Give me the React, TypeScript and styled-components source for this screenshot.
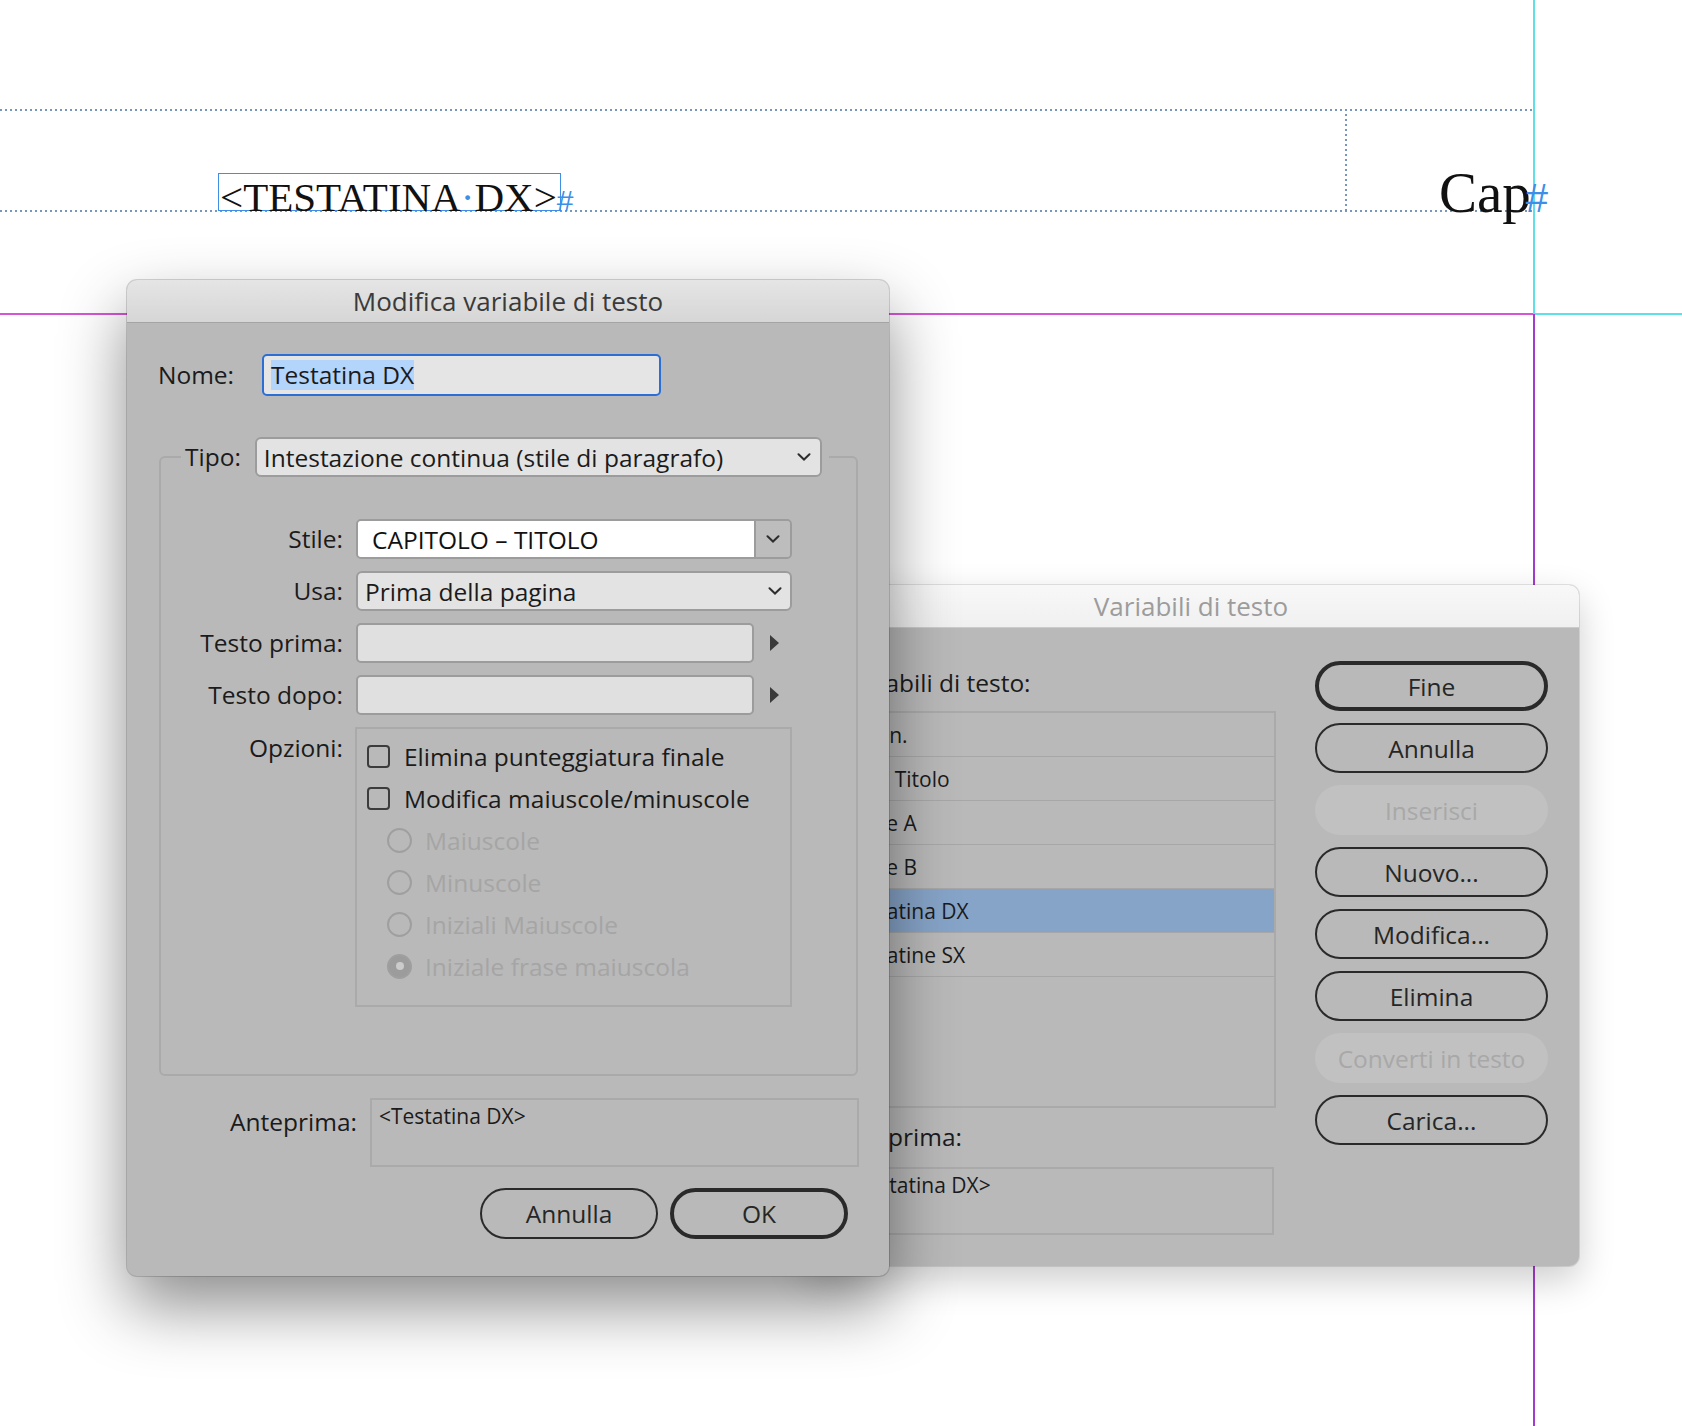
import React from "react";
import styled, { createGlobalStyle, css } from "styled-components";

const GlobalStyle = createGlobalStyle`
  html, body {
    margin: 0;
    padding: 0;
    background: #ffffff;
  }
  body {
    font-family: "Open Sans", "Liberation Sans", sans-serif;
    overflow: hidden;
  }
`;

const Canvas = styled.div`
  position: relative;
  width: 1682px;
  height: 1426px;
  overflow: hidden;
  background: #ffffff;
`;

// guides and frames live on the document page, so they keep their page coordinates
const Guide = styled.div<{
  $top: number;
  $left: number;
  $w: number;
  $h: number;
  $color: string;
  $dotted?: boolean;
}>`
  position: absolute;
  top: ${(p) => p.$top}px;
  left: ${(p) => p.$left}px;
  width: ${(p) => p.$w}px;
  height: ${(p) => p.$h}px;
  background: ${(p) =>
    p.$dotted
      ? `repeating-linear-gradient(${p.$w > p.$h ? "90deg" : "180deg"}, ${p.$color} 0 2px, transparent 2px 5px)`
      : p.$color};
`;

const TextFrame = styled.div`
  position: absolute;
  left: 218px;
  top: 173px;
  width: 341px;
  height: 36px;
  border: 1px solid #3f8fe4;
`;

const FrameText = styled.div`
  font-family: "Liberation Serif", serif;
  font-size: 41px;
  line-height: 47px;
  color: #111111;
  white-space: nowrap;
  padding-left: 1px;
`;

const SpaceMark = styled.span`
  color: #3f8fe4;
`;

const StoryEnd = styled.span<{ $size: number; $shift?: number }>`
  font-family: "Liberation Sans", sans-serif;
  font-size: ${(p) => p.$size}px;
  color: #3b8fe8;
  margin-left: ${(p) => p.$shift ?? 0}px;
`;

const RunningHead = styled.div`
  position: absolute;
  left: 1439px;
  top: 163px;
  font-family: "Liberation Serif", serif;
  font-size: 57px;
  line-height: 60px;
  color: #111111;
  white-space: nowrap;
`;

const Window = styled.section<{
  $left: number;
  $top: number;
  $width: number;
  $height: number;
  $front?: boolean;
}>`
  position: absolute;
  left: ${(p) => p.$left}px;
  top: ${(p) => p.$top}px;
  width: ${(p) => p.$width}px;
  height: ${(p) => p.$height}px;
  z-index: ${(p) => (p.$front ? 3 : 2)};
  display: flex;
  flex-direction: column;
  box-sizing: border-box;
  background: #b9b9b9;
  border-radius: 10px;
  overflow: hidden;
  color: #1b1b1b;
  box-shadow: ${(p) =>
    p.$front
      ? "0 0 0 1px rgba(0,0,0,0.16), 0 30px 66px rgba(0,0,0,0.45)"
      : "0 0 0 1px rgba(0,0,0,0.10), 0 14px 36px rgba(0,0,0,0.20)"};
`;

const TitleBar = styled.header<{ $active?: boolean }>`
  flex: none;
  height: 42px;
  display: flex;
  align-items: center;
  justify-content: center;
  font-size: 26px;
  background: ${(p) =>
    p.$active ? "linear-gradient(#e5e5e5, #d6d6d6)" : "linear-gradient(#f8f8f8, #f0f0f0)"};
  border-bottom: 1px solid ${(p) => (p.$active ? "#a4a4a4" : "#cbcbcb")};
  color: ${(p) => (p.$active ? "#3a3a3a" : "#9c9c9c")};
`;

const Label = styled.span<{ $width?: number; $right?: boolean; $top?: boolean }>`
  font-size: 24.5px;
  line-height: 34px;
  white-space: nowrap;
  ${(p) => p.$width && `width: ${p.$width}px; flex: none;`}
  ${(p) => p.$right && "text-align: right;"}
  ${(p) =>
    p.$top &&
    css`
      align-self: start;
      margin-top: 4px;
    `}
`;

/* ---------- Modifica variabile di testo ---------- */

const EditBody = styled.div`
  display: flex;
  flex-direction: column;
  padding-top: 31px;
`;

const NameRow = styled.div`
  display: flex;
  align-items: center;
  padding-left: 31px;
`;

const NameField = styled.div`
  width: 399px;
  height: 42px;
  box-sizing: border-box;
  display: flex;
  align-items: center;
  padding-left: 7px;
  border: 2.5px solid #2b6fd6;
  border-radius: 5px;
  background: #e5e5e5;
  font-size: 24.5px;
`;

const Selection = styled.span`
  background: #b3d4fb;
  line-height: 30px;
`;

const Group = styled.fieldset`
  margin: 41px 31px 0 32px;
  padding: 0 0 67px 0;
  min-width: 0;
  border: 2px solid #aaaaaa;
  border-radius: 6px;
`;

const GroupLegend = styled.legend`
  display: flex;
  align-items: center;
  gap: 14px;
  margin-left: 20px;
  padding: 0 7px 0 4px;
`;

const Select = styled.div<{ $width: number; $pad: number }>`
  width: ${(p) => p.$width}px;
  height: 40px;
  box-sizing: border-box;
  display: flex;
  align-items: center;
  justify-content: space-between;
  padding: 0 ${(p) => p.$pad}px 0 7px;
  background: #e3e3e3;
  border: 2px solid #9c9c9c;
  border-radius: 6px;
  font-size: 24.5px;
  white-space: nowrap;
`;

const Combo = styled.div`
  width: 436px;
  height: 40px;
  box-sizing: border-box;
  display: flex;
  border: 2px solid #9c9c9c;
  border-radius: 5px;
  overflow: hidden;
`;

const ComboText = styled.div`
  flex: 1;
  display: flex;
  align-items: center;
  padding-left: 14px;
  background: #ffffff;
  border-right: 2px solid #9c9c9c;
  font-size: 24.5px;
  color: #111111;
`;

const ComboButton = styled.div`
  width: 34px;
  display: flex;
  align-items: center;
  justify-content: center;
  background: #bdbdbd;
`;

const FieldGrid = styled.div`
  display: grid;
  grid-template-columns: 182px 436px;
  column-gap: 13px;
  row-gap: 12px;
  align-items: center;
  margin-top: 42px;
`;

const FieldLine = styled.div`
  display: flex;
  align-items: center;
  gap: 16px;
`;

const TextInput = styled.div<{ $width: number }>`
  width: ${(p) => p.$width}px;
  height: 40px;
  box-sizing: border-box;
  background: #e0e0e0;
  border: 2px solid #9c9c9c;
  border-radius: 5px;
`;

const OptionsBox = styled.div`
  height: 280px;
  width: 437px;
  margin-left: -1px;
  box-sizing: border-box;
  padding: 6px 0 0 10px;
  border: 2px solid #aaaaaa;
`;

const Option = styled.div<{ $indent?: boolean; $disabled?: boolean }>`
  height: 42px;
  display: flex;
  align-items: center;
  gap: 13px;
  padding-left: ${(p) => (p.$indent ? 20 : 0)}px;
  font-size: 24.5px;
  white-space: nowrap;
  color: ${(p) => (p.$disabled ? "#a5a5a5" : "#1b1b1b")};
`;

const CheckBox = styled.span`
  flex: none;
  width: 23px;
  height: 23px;
  margin-right: 1px;
  box-sizing: border-box;
  border: 2px solid #3c3c3c;
  border-radius: 4px;
`;

const Radio = styled.span<{ $checked?: boolean }>`
  flex: none;
  width: 25px;
  height: 25px;
  box-sizing: border-box;
  border-radius: 50%;
  border: 2px solid #9f9f9f;
  display: flex;
  align-items: center;
  justify-content: center;
  ${(p) =>
    p.$checked &&
    css`
      background: #9c9c9c;
      &::after {
        content: "";
        width: 8px;
        height: 8px;
        border-radius: 50%;
        background: #cbcbcb;
      }
    `}
`;

const PreviewRow = styled.div`
  display: flex;
  justify-content: flex-end;
  align-items: flex-start;
  gap: 13px;
  margin: 22px 30px 0 0;
`;

const PreviewLabel = styled(Label)`
  margin-top: 7px;
`;

const PreviewBox = styled.div<{ $width: number; $height: number }>`
  width: ${(p) => p.$width}px;
  height: ${(p) => p.$height}px;
  box-sizing: border-box;
  padding: 2px 7px;
  border: 2px solid #aaaaaa;
  font-size: 21px;
  line-height: 28px;
  white-space: nowrap;
`;

const ButtonRow = styled.div`
  display: flex;
  justify-content: flex-end;
  gap: 12px;
  margin: 21px 41px 0 0;
`;

const PushButton = styled.button<{ $default?: boolean; $width: number; $height: number }>`
  width: ${(p) => p.$width}px;
  height: ${(p) => p.$height}px;
  box-sizing: border-box;
  padding: 0;
  border-radius: ${(p) => p.$height / 2}px;
  border: ${(p) => (p.$default ? 4 : 2)}px solid #2a2a2a;
  background: transparent;
  font-family: inherit;
  font-size: 24.5px;
  color: #262626;
  &:disabled {
    border-color: transparent;
    background: #c1c1c1;
    color: #a8a8a8;
  }
`;

/* ---------- Variabili di testo ---------- */

const VarsBody = styled.div`
  display: flex;
  gap: 39px;
  padding: 33px 31px 0 32px;
`;

const ListColumn = styled.div`
  width: 441px;
  flex: none;
  display: flex;
  flex-direction: column;
  padding-top: 5px;
`;

const ListCaption = styled(Label)`
  padding-left: 6px;
`;

const VarList = styled.div`
  height: 397px;
  margin-top: 11px;
  box-sizing: border-box;
  border: 2px solid #aaaaaa;
`;

const VarRow = styled.div<{ $selected?: boolean }>`
  height: 44px;
  box-sizing: border-box;
  display: flex;
  align-items: center;
  padding-left: 9px;
  border-bottom: 1px solid #a7a7a7;
  font-size: 21px;
  white-space: nowrap;
  background: ${(p) => (p.$selected ? "#86a4c8" : "transparent")};
`;

const ListLabel = styled(Label)`
  margin-top: 12px;
`;

const ListPreview = styled(PreviewBox)`
  margin-top: 13px;
`;

const ButtonStack = styled.div`
  display: flex;
  flex-direction: column;
  gap: 12px;
`;

const Chevron = () => (
  <svg width="14" height="8" viewBox="0 0 14 8" fill="none">
    <path d="M1.5 1.2 L7 6.5 L12.5 1.2" stroke="#2e2e2e" strokeWidth="2" strokeLinecap="round" />
  </svg>
);

const Arrow = () => (
  <svg width="9" height="16" viewBox="0 0 9 16">
    <path d="M0 0 L9 8 L0 16 Z" fill="#3a3a3a" />
  </svg>
);

const variables = [
  { name: "Cap n." },
  { name: "Cap. Titolo" },
  { name: "Parte A" },
  { name: "Parte B" },
  { name: "Testatina DX", selected: true },
  { name: "Testatine SX" },
];

const sideButtons = [
  { label: "Fine", primary: true },
  { label: "Annulla" },
  { label: "Inserisci", disabled: true },
  { label: "Nuovo..." },
  { label: "Modifica..." },
  { label: "Elimina" },
  { label: "Converti in testo", disabled: true },
  { label: "Carica..." },
];

const caseOptions = [
  { label: "Maiuscole" },
  { label: "Minuscole" },
  { label: "Iniziali Maiuscole" },
  { label: "Iniziale frase maiuscola", checked: true },
];

export default function App() {
  return (
    <Canvas>
      <GlobalStyle />

      <Guide $top={109} $left={0} $w={1534} $h={2} $color="#7696bb" $dotted />
      <Guide $top={210} $left={0} $w={1534} $h={2} $color="#7696bb" $dotted />
      <Guide $top={109} $left={1345} $w={2} $h={102} $color="#7696bb" $dotted />
      <Guide $top={313} $left={0} $w={1534} $h={2} $color="#d655d6" />
      <Guide $top={313} $left={1534} $w={148} $h={2} $color="#5fe0e8" />
      <Guide $top={0} $left={1533} $w={2} $h={314} $color="#5fe0e8" />
      <Guide $top={314} $left={1533} $w={2} $h={1112} $color="#a33ccc" />

      <TextFrame>
        <FrameText>
          {"<"}TESTATINA<SpaceMark>·</SpaceMark>DX{">"}
          <StoryEnd $size={30}>#</StoryEnd>
        </FrameText>
      </TextFrame>

      <RunningHead>
        Cap<StoryEnd $size={40} $shift={-5}>#</StoryEnd>
      </RunningHead>

      <Window $left={803} $top={585} $width={776} $height={681}>
        <TitleBar>Variabili di testo</TitleBar>
        <VarsBody>
          <ListColumn>
            <ListCaption>Variabili di testo:</ListCaption>
            <VarList>
              {variables.map((v) => (
                <VarRow key={v.name} $selected={v.selected}>
                  {v.name}
                </VarRow>
              ))}
            </VarList>
            <ListLabel>Anteprima:</ListLabel>
            <ListPreview $width={439} $height={68}>
              {"<Testatina DX>"}
            </ListPreview>
          </ListColumn>
          <ButtonStack>
            {sideButtons.map((b) => (
              <PushButton
                key={b.label}
                $width={233}
                $height={50}
                $default={b.primary}
                disabled={b.disabled}
              >
                {b.label}
              </PushButton>
            ))}
          </ButtonStack>
        </VarsBody>
      </Window>

      <Window $left={127} $top={280} $width={762} $height={996} $front>
        <TitleBar $active>Modifica variabile di testo</TitleBar>
        <EditBody>
          <NameRow>
            <Label $width={104}>Nome:</Label>
            <NameField>
              <Selection>Testatina DX</Selection>
            </NameField>
          </NameRow>

          <Group>
            <GroupLegend>
              <Label>Tipo:</Label>
              <Select $width={567} $pad={9}>
                Intestazione continua (stile di paragrafo)
                <Chevron />
              </Select>
            </GroupLegend>

            <FieldGrid>
              <Label $right>Stile:</Label>
              <Combo>
                <ComboText>CAPITOLO – TITOLO</ComboText>
                <ComboButton>
                  <Chevron />
                </ComboButton>
              </Combo>

              <Label $right>Usa:</Label>
              <Select $width={436} $pad={8}>
                Prima della pagina
                <Chevron />
              </Select>

              <Label $right>Testo prima:</Label>
              <FieldLine>
                <TextInput $width={398} />
                <Arrow />
              </FieldLine>

              <Label $right>Testo dopo:</Label>
              <FieldLine>
                <TextInput $width={398} />
                <Arrow />
              </FieldLine>

              <Label $right $top>
                Opzioni:
              </Label>
              <OptionsBox>
                <Option>
                  <CheckBox />
                  Elimina punteggiatura finale
                </Option>
                <Option>
                  <CheckBox />
                  Modifica maiuscole/minuscole
                </Option>
                {caseOptions.map((o) => (
                  <Option key={o.label} $indent $disabled>
                    <Radio $checked={o.checked} />
                    {o.label}
                  </Option>
                ))}
              </OptionsBox>
            </FieldGrid>
          </Group>

          <PreviewRow>
            <PreviewLabel>Anteprima:</PreviewLabel>
            <PreviewBox $width={489} $height={69}>
              {"<Testatina DX>"}
            </PreviewBox>
          </PreviewRow>

          <ButtonRow>
            <PushButton $width={178} $height={51}>
              Annulla
            </PushButton>
            <PushButton $width={178} $height={51} $default>
              OK
            </PushButton>
          </ButtonRow>
        </EditBody>
      </Window>
    </Canvas>
  );
}
